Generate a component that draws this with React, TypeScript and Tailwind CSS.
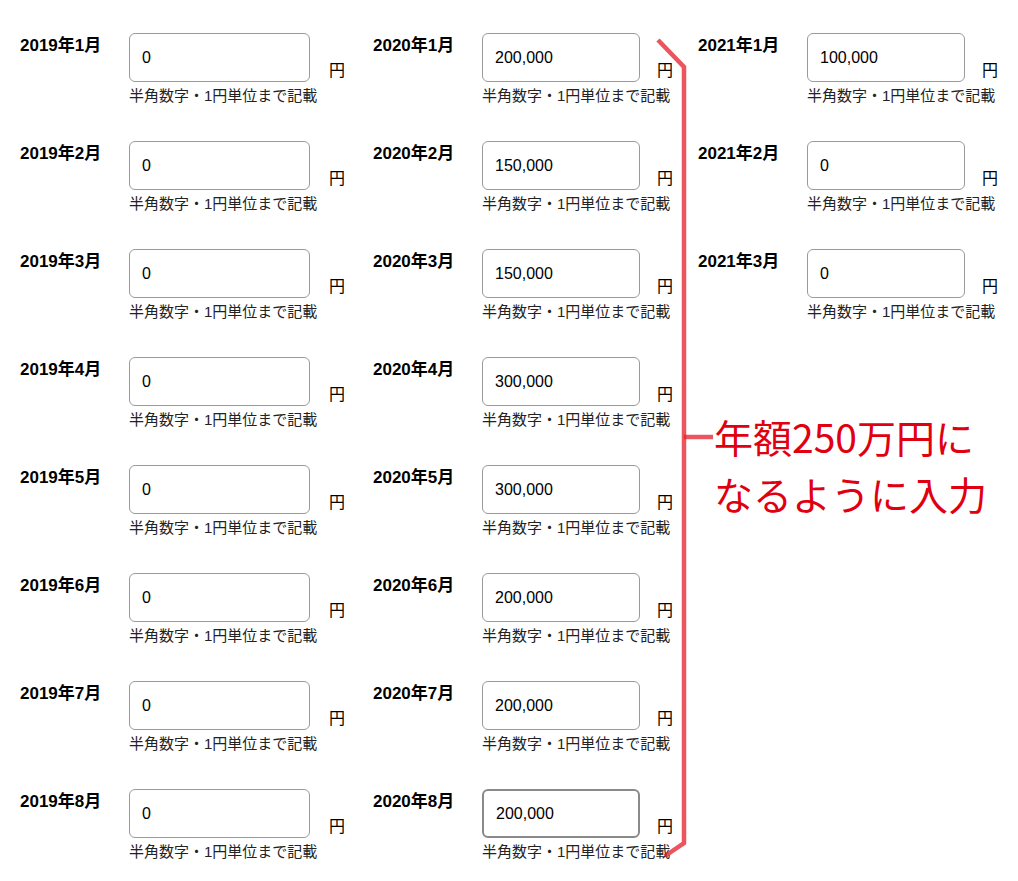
import React from 'react'

type Field = { label: string; value: string; focused?: boolean }

const col2019: Field[] = [1, 2, 3, 4, 5, 6, 7, 8].map(m => ({ label: `2019年${m}月`, value: '0' }))
const col2020: Field[] = [
  { label: '2020年1月', value: '200,000' },
  { label: '2020年2月', value: '150,000' },
  { label: '2020年3月', value: '150,000' },
  { label: '2020年4月', value: '300,000' },
  { label: '2020年5月', value: '300,000' },
  { label: '2020年6月', value: '200,000' },
  { label: '2020年7月', value: '200,000' },
  { label: '2020年8月', value: '200,000', focused: true },
]
const col2021: Field[] = [
  { label: '2021年1月', value: '100,000' },
  { label: '2021年2月', value: '0' },
  { label: '2021年3月', value: '0' },
]

const font = { fontFamily: '"Liberation Sans", "Noto Sans CJK JP", sans-serif' }

function MonthField({ field, inputWidth, unitGap }: { field: Field; inputWidth: string; unitGap: string }) {
  return (
    <div className="flex items-start h-[108px]">
      <div className="w-[109px] shrink-0 pt-[1px] text-[17px] leading-[24px] font-bold text-black">{field.label}</div>
      <div className="flex flex-col">
        <div className="flex items-end">
          <input
            readOnly
            value={field.value}
            className={`${inputWidth} h-[49px] rounded-[6px] px-[12px] text-[16px] text-black bg-white outline-none ${
              field.focused ? 'border-2 border-[#8a8a8a]' : 'border border-[#9a9a9a]'
            }`}
            style={font}
          />
          <span className={`${unitGap} text-[16px] leading-[20px] mb-[1px] text-black`}>円</span>
        </div>
        <div className="mt-[4px] text-[15px] leading-[20px] text-[#222] whitespace-nowrap">半角数字・1円単位まで記載</div>
      </div>
    </div>
  )
}

export default function App() {
  return (
    <div className="relative w-[1018px] h-[881px] bg-white overflow-hidden" style={font}>
      <div className="flex pt-[33px] pl-[20px]">
        <div className="w-[353px] shrink-0">
          {col2019.map(f => (
            <MonthField key={f.label} field={f} inputWidth="w-[181px]" unitGap="ml-[19px]" />
          ))}
        </div>
        <div className="w-[325px] shrink-0">
          {col2020.map(f => (
            <MonthField key={f.label} field={f} inputWidth="w-[158px]" unitGap="ml-[17px]" />
          ))}
        </div>
        <div className="w-[320px] shrink-0">
          {col2021.map(f => (
            <MonthField key={f.label} field={f} inputWidth="w-[158px]" unitGap="ml-[17px]" />
          ))}
        </div>
      </div>

      {/* bracket annotation */}
      <svg className="absolute left-0 top-0 pointer-events-none" width="1018" height="881">
        <g stroke="rgba(228,30,40,0.75)" strokeWidth="4.5" fill="none">
          <polyline points="658,40 684,67 684,843 665,856" strokeLinejoin="miter" />
          <line x1="684" y1="437" x2="713" y2="437" />
        </g>
      </svg>
      <div
        className="absolute left-[714px] top-[408px] text-[39px] leading-[57px] text-[#e00010] whitespace-nowrap"
        style={{ fontFamily: '"Noto Sans CJK JP", sans-serif' }}
      >
        <div>年額250万円に</div>
        <div>なるように入力</div>
      </div>
    </div>
  )
}
